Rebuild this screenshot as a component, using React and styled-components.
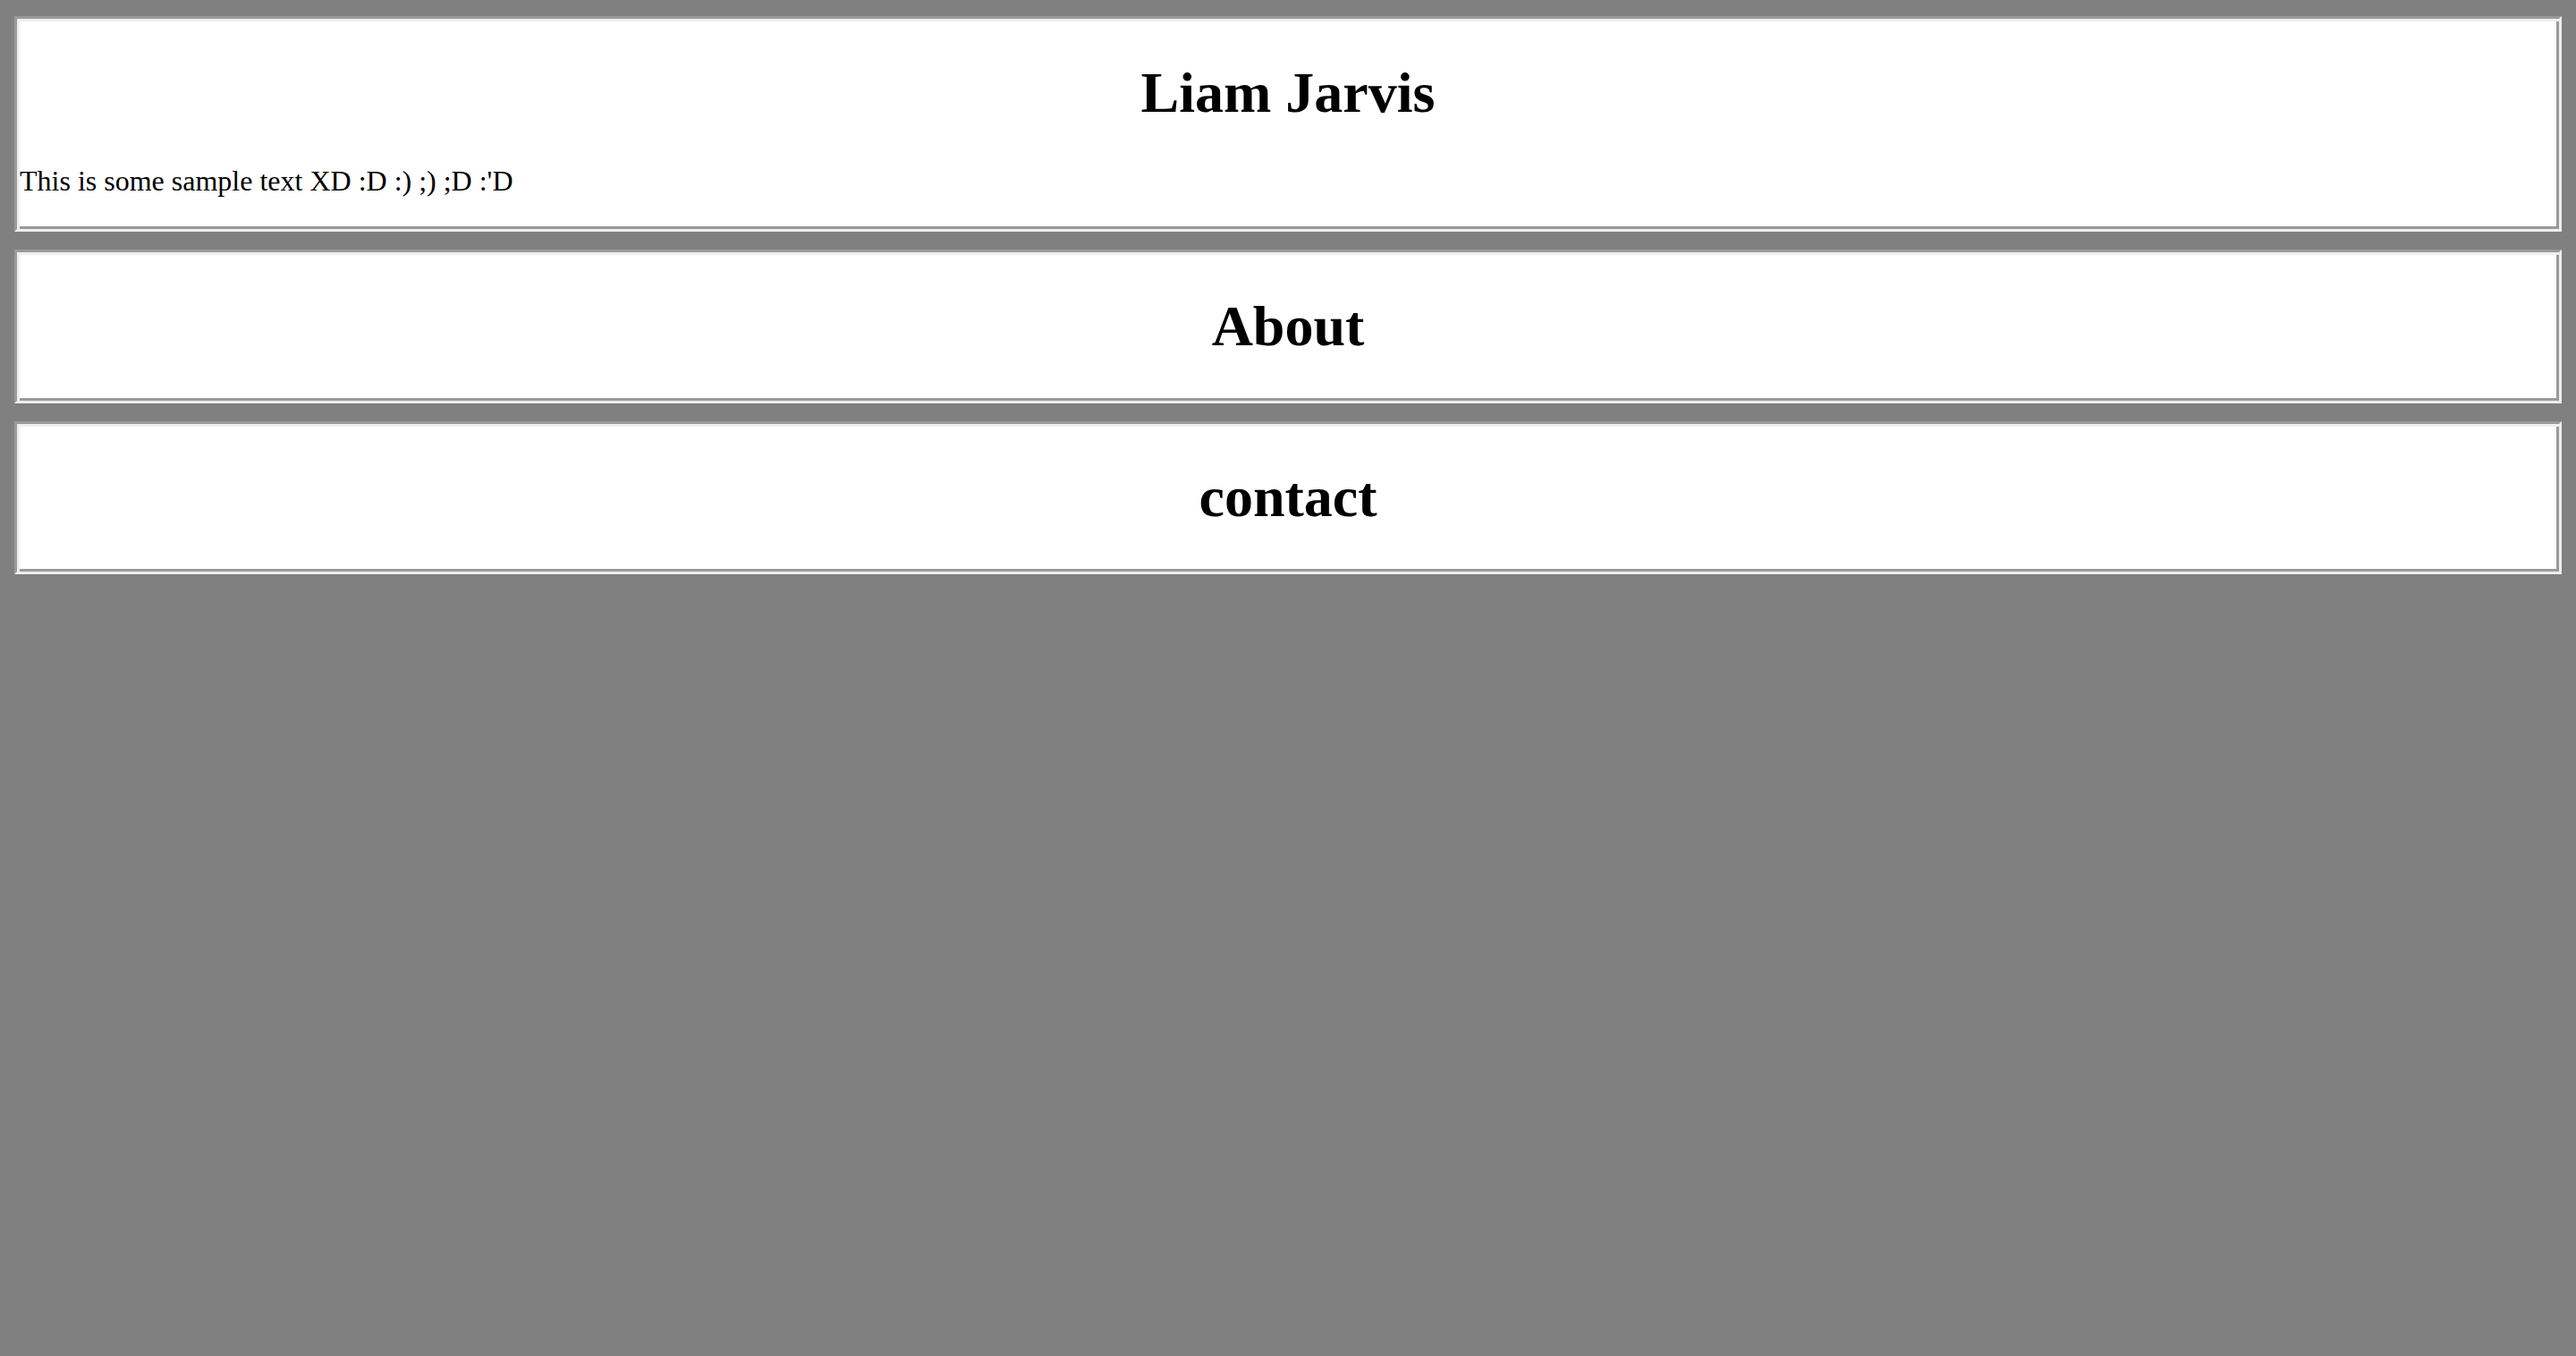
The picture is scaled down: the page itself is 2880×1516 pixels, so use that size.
import React from "react"
import styled, { createGlobalStyle } from 'styled-components'

const GlobalStyle = createGlobalStyle`
  html, body {
    margin: 0;
    padding: 0;
    background: #808080;
    min-height: 100%;
  }
  body {
    font-family: "Liberation Serif", "Times New Roman", serif;
    color: #000;
  }
`

const App = () => {
  return (
    <>
      <GlobalStyle />
      <Page>
        <Panel>
          <Heading>Liam Jarvis</Heading>
          <Text>This is some sample text XD :D :) ;) ;D :'D</Text>
        </Panel>
        <Panel>
          <Heading>About</Heading>
        </Panel>
        <Panel>
          <Heading>contact</Heading>
        </Panel>
      </Page>
    </>
  )
}

// styles

const Page = styled.div`
  display: flex;
  flex-direction: column;
  gap: 20px;
  padding: 18px 16px 0 16px;
  min-height: 1516px;
  box-sizing: border-box;
`

// groove-like bevel: dark outer / light inner on top-left, reversed on bottom-right
const Panel = styled.div`
  background: #fff;
  border: 3px solid;
  border-color: #9a9a9a #eeeeee #eeeeee #9a9a9a;
  box-shadow: inset 3px 3px 0 #eeeeee, inset -3px -3px 0 #9a9a9a;
  padding: 3px;
`

const Heading = styled.h1`
  font-size: 64px;
  font-weight: bold;
  text-align: center;
  margin: 42.88px 0;
`

const Text = styled.p`
  font-size: 32px;
  margin: 32px 0;
`

export default App
